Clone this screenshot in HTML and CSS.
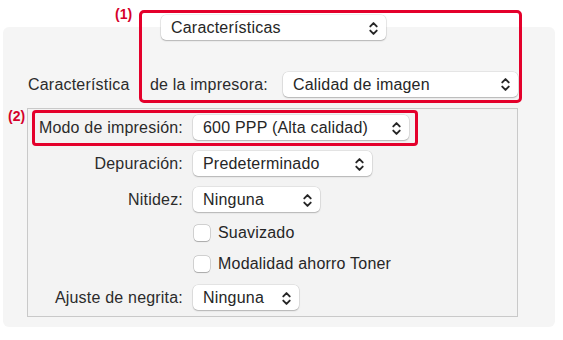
FILE: index.html
```html
<!DOCTYPE html>
<html>
<head>
<meta charset="utf-8">
<link rel="stylesheet" href="styles.css">
</head>
<body>
<div class="page">
  <div class="tabpop popup w-car"><span>Características</span><svg class="chev" viewBox="0 0 10 14"><path d="M2 5 L5 2 L8 5 M2 9 L5 12 L8 9"/></svg></div>
  <div class="panel">
    <div class="feat-row">
      <span class="feat-label"><span class="first">Característica</span><span>de la impresora:</span></span>
      <div class="popup w-cal"><span>Calidad de imagen</span><svg class="chev" viewBox="0 0 10 14"><path d="M2 5 L5 2 L8 5 M2 9 L5 12 L8 9"/></svg></div>
    </div>
    <div class="box">
      <div class="grid">
        <span class="lbl">Modo de impresión:</span>
        <div class="popup w-modo"><span>600 PPP (Alta calidad)</span><svg class="chev" viewBox="0 0 10 14"><path d="M2 5 L5 2 L8 5 M2 9 L5 12 L8 9"/></svg></div>
        <span class="lbl">Depuración:</span>
        <div class="popup w-dep"><span>Predeterminado</span><svg class="chev" viewBox="0 0 10 14"><path d="M2 5 L5 2 L8 5 M2 9 L5 12 L8 9"/></svg></div>
        <span class="lbl">Nitidez:</span>
        <div class="popup w-nit"><span>Ninguna</span><svg class="chev" viewBox="0 0 10 14"><path d="M2 5 L5 2 L8 5 M2 9 L5 12 L8 9"/></svg></div>
        <span></span>
        <label class="check"><span class="cb"></span><span>Suavizado</span></label>
        <span></span>
        <label class="check"><span class="cb"></span><span>Modalidad ahorro Toner</span></label>
        <span class="lbl">Ajuste de negrita:</span>
        <div class="popup w-aj"><span>Ninguna</span><svg class="chev" viewBox="0 0 10 14"><path d="M2 5 L5 2 L8 5 M2 9 L5 12 L8 9"/></svg></div>
      </div>
    </div>
  </div>
  <span class="tag tag1">(1)</span>
  <div class="mark mark1"></div>
  <span class="tag tag2">(2)</span>
  <div class="mark mark2"></div>
</div>
</body>
</html>
```
FILE: styles.css
```css
* { box-sizing: border-box; }
html, body { margin: 0; padding: 0; background: #fff; }
body {
  font-family: "Liberation Sans", Arial, sans-serif;
  font-size: 16px;
  letter-spacing: 0.2px;
  color: #262626;
  width: 563px;
  height: 340px;
  overflow: hidden;
}
.page {
  position: relative;
  display: flex;
  flex-direction: column;
  padding-top: 15px;
}
.popup {
  display: flex;
  align-items: center;
  justify-content: space-between;
  height: 25px;
  padding: 1px 7px 0 10px;
  background: #fff;
  border-radius: 5px;
  box-shadow: 0 0 0 0.5px rgba(0,0,0,0.12), 0 1px 1.5px rgba(0,0,0,0.22);
  white-space: nowrap;
}
.chev {
  width: 11px;
  height: 15px;
  fill: none;
  stroke: #262626;
  stroke-width: 1.8;
  stroke-linecap: round;
  stroke-linejoin: round;
}
.tabpop {
  position: relative;
  z-index: 1;
  margin-left: 161px;
}
.w-car { width: 225px; }
.w-cal { width: 235px; }
.w-modo { width: 216px; }
.w-dep { width: 179px; }
.w-nit { width: 127px; }
.w-aj { width: 106px; }

.panel {
  margin: -13px 0 0 3px;
  width: 552px;
  height: 300px;
  background: #f5f5f5;
  border-radius: 6px;
  padding: 44px 0 0 25px;
}
.feat-row {
  display: flex;
  align-items: center;
  height: 26px;
}
.feat-label {
  display: flex;
  width: 255px;
  color: #2b2b2b;
  padding-top: 1px;
}
.feat-label .first { width: 122px; }
.box {
  margin: 11px 0 0 -1px;
  width: 491px;
  height: 209px;
  border: 1px solid #c9c9c9;
  background: #f3f3f3;
  padding-top: 6px;
}
.grid {
  display: grid;
  grid-template-columns: 155px auto;
  grid-template-rows: 25px 25px 25px 20px 20px 25px;
  column-gap: 10px;
  row-gap: 11px;
  justify-items: start;
  align-items: center;
}
.lbl {
  justify-self: end;
  color: #2b2b2b;
  padding-top: 1px;
}
.check {
  display: flex;
  align-items: center;
  gap: 8px;
  margin-left: 1px;
}
.cb {
  width: 16px;
  height: 16px;
  background: #fff;
  border-radius: 4px;
  box-shadow: 0 0 0 0.5px rgba(0,0,0,0.25), 0 0.5px 1px rgba(0,0,0,0.2);
}
.tag {
  position: absolute;
  color: #d6002a;
  font-weight: bold;
  font-size: 14px;
  letter-spacing: 0;
}
.tag1 { left: 115px; top: 6px; }
.tag2 { left: 8px; top: 108px; }
.mark {
  position: absolute;
  border: 3px solid #e4002b;
  border-radius: 5px;
}
.mark1 { left: 139px; top: 10px; width: 383px; height: 93px; }
.mark2 { left: 32px; top: 110px; width: 386px; height: 36px; border-radius: 4px; }
```
